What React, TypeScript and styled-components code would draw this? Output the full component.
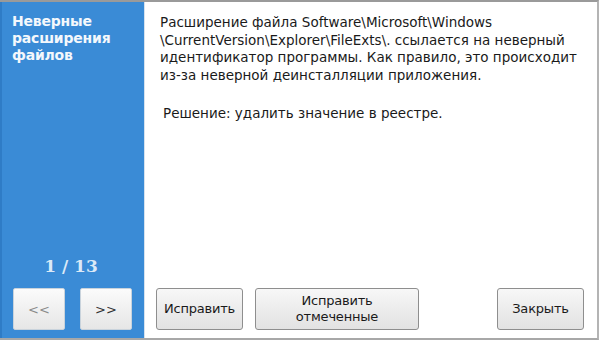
import React from "react";
import styled, { createGlobalStyle } from "styled-components";

const Global = createGlobalStyle`
  html, body { margin: 0; padding: 0; background: #ffffff; }
  body { font-family: "DejaVu Sans", Verdana, sans-serif; }
`;

const Frame = styled.div`
  width: 597px;
  height: 336px;
  border-top: 2px solid #9a9a9a;
  border-right: 2px solid #b4b4b4;
  border-bottom: 2px solid #a8a8a8;
  display: grid;
  grid-template-columns: 145px 1fr;
  background: #ffffff;
`;

const Sidebar = styled.div`
  background: #3a8bd6;
  border-left: 2px solid #2f7cc6;
  border-right: 1px solid #d6e2ee;
  display: flex;
  flex-direction: column;
  padding: 11px 0 8px 10px;
  box-sizing: border-box;
`;

const Title = styled.div`
  color: #f4f8fc;
  font-family: "DejaVu Sans", Verdana, sans-serif;
  font-weight: bold;
  font-size: 14px;
  line-height: 17px;
  letter-spacing: -0.2px;
  flex: 1;
`;

const Counter = styled.div`
  color: #dbe9f7;
  font-family: "DejaVu Serif", Georgia, serif;
  font-weight: bold;
  font-size: 17px;
  text-align: center;
  padding-right: 14px;
  margin-bottom: 12px;
`;

const NavRow = styled.div`
  display: flex;
  gap: 15px;
  padding-left: 1px;
`;

const NavButton = styled.button<{ $dim?: boolean }>`
  width: 52px;
  height: 42px;
  border: 1px solid #c9d3dc;
  border-radius: 2px;
  background: linear-gradient(#fbfbfb, #e6e6e6);
  color: ${(p) => (p.$dim ? "#8a8a8a" : "#333333")};
  font-family: "DejaVu Sans", Verdana, sans-serif;
  font-size: 13px;
  padding: 0;
`;

const Main = styled.div`
  display: flex;
  flex-direction: column;
  padding: 12px 13px 8px 11px;
  box-sizing: border-box;
`;

const Message = styled.div`
  flex: 1;
  padding-left: 4px;
  color: #1a1a1a;
  font-family: "DejaVu Sans", Verdana, sans-serif;
  font-size: 13.5px;
  line-height: 17.5px;
`;

const Paragraph = styled.p`
  margin: 0 0 21px 0;
`;

const Solution = styled.p`
  margin: 0;
  padding-left: 3px;
`;

const ButtonRow = styled.div`
  display: flex;
  align-items: center;
  gap: 12px;
`;

const Spacer = styled.div`
  flex: 1;
`;

const ActionButton = styled.button<{ $w: number }>`
  width: ${(p) => p.$w}px;
  height: 42px;
  border: 1px solid #8e8e8e;
  border-radius: 3px;
  background: linear-gradient(#f7f7f7, #e2e2e2);
  color: #1a1a1a;
  font-family: "DejaVu Sans", Verdana, sans-serif;
  font-size: 13px;
  line-height: 16px;
  letter-spacing: -0.2px;
  padding: 0 2px;
`;

export default function App() {
  return (
    <>
      <Global />
      <Frame>
        <Sidebar>
          <Title>
            Неверные
            <br />
            расширения
            <br />
            файлов
          </Title>
          <Counter>1 / 13</Counter>
          <NavRow>
            <NavButton $dim>&lt;&lt;</NavButton>
            <NavButton>&gt;&gt;</NavButton>
          </NavRow>
        </Sidebar>
        <Main>
          <Message>
            <Paragraph>
              Расширение файла Software\Microsoft\Windows
              <br />
              \CurrentVersion\Explorer\FileExts\. ссылается на неверный
              <br />
              идентификатор программы. Как правило, это происходит
              <br />
              из-за неверной деинсталляции приложения.
            </Paragraph>
            <Solution>Решение: удалить значение в реестре.</Solution>
          </Message>
          <ButtonRow>
            <ActionButton $w={87}>Исправить</ActionButton>
            <ActionButton $w={164}>
              Исправить
              <br />
              отмеченные
            </ActionButton>
            <Spacer />
            <ActionButton $w={87}>Закрыть</ActionButton>
          </ButtonRow>
        </Main>
      </Frame>
    </>
  );
}
